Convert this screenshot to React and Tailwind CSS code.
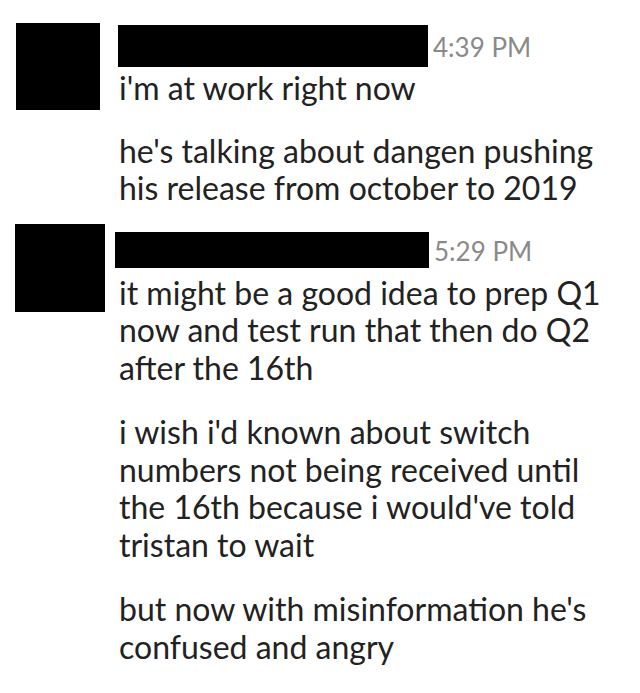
import React from 'react';

const messages = [
  {
    time: '4:39 PM',
    avatar: 'ml-[16px] w-[84px] h-[87px]',
    bar: 'mt-[2px] w-[310px] h-[42px]',
    stamp: 'mt-[11px]',
    textTop: 'mt-[2px]',
    gap: 'mt-[25px]',
    paragraphs: [
      "i'm at work right now",
      "he's talking about dangen pushing his release from october to 2019",
    ],
  },
  {
    time: '5:29 PM',
    avatar: 'ml-[15px] w-[90px] h-[88px]',
    bar: 'mt-[8px] -ml-[3px] w-[314px] h-[36px]',
    stamp: 'mt-[14px]',
    textTop: 'mt-[6px]',
    gap: 'mt-[27px]',
    paragraphs: [
      'it might be a good idea to prep Q1 now and test run that then do Q2 after the 16th',
      "i wish i'd known about switch numbers not being received until the 16th because i would've told tristan to wait",
      "but now with misinformation he's confused and angry",
    ],
  },
];

const Message = ({ msg, className }) => (
  <div className={`flex ${className}`}>
    <div className="w-[119px] shrink-0">
      <div className={`bg-black ${msg.avatar}`} />
    </div>
    <div className="flex-1 min-w-0">
      <div className="flex items-start -ml-[1px]">
        <div className={`bg-black shrink-0 ${msg.bar}`} />
        <span className={`ml-[5px] text-[26px] leading-[26px] text-[#8a8a8a] ${msg.stamp}`}>
          {msg.time}
        </span>
      </div>
      {msg.paragraphs.map((p, i) => (
        <p
          key={i}
          className={`text-[32px] leading-[37.5px] text-[#222222] ${i === 0 ? msg.textTop : msg.gap}`}
        >
          {p}
        </p>
      ))}
    </div>
  </div>
);

export default function App() {
  return (
    <div
      className="w-[640px] h-[693px] bg-white pt-[23px] pr-[16px] overflow-hidden"
      style={{ fontFamily: 'Lato, "Liberation Sans", sans-serif' }}
    >
      <Message msg={messages[0]} />
      <Message msg={messages[1]} className="mt-[17px]" />
    </div>
  );
}
